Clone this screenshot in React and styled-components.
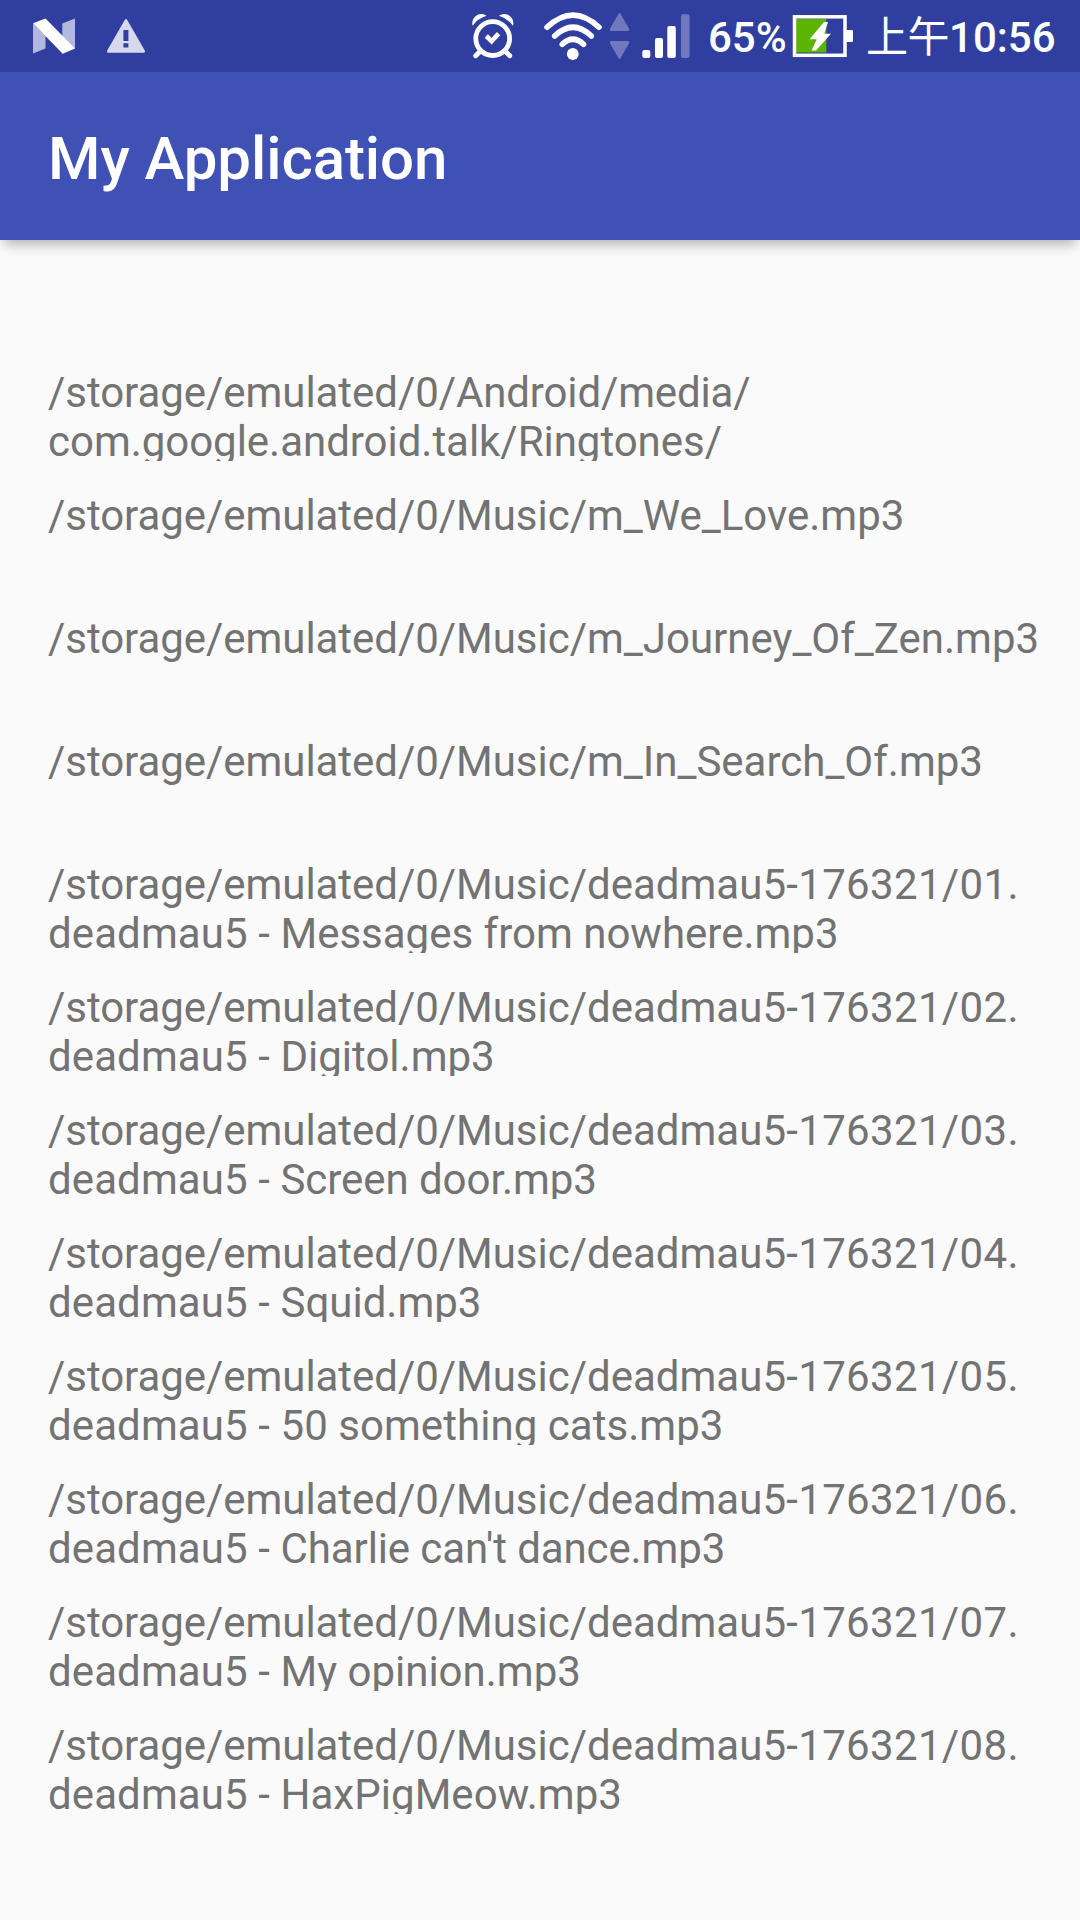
import React from "react";
import styled, { createGlobalStyle } from "styled-components";

const GlobalStyle = createGlobalStyle`
  * { box-sizing: border-box; }
  body { margin: 0; background: #fafafa; }
`;

const Screen = styled.div`
  display: flex;
  flex-direction: column;
  width: 1080px;
  height: 1920px;
  overflow: hidden;
  background: #fafafa;
  font-family: Roboto, "Noto Sans CJK TC", sans-serif;
`;

const StatusBar = styled.header`
  display: flex;
  flex: none;
  justify-content: space-between;
  height: 72px;
  padding: 0 24px 0 32px;
  background: #303f9f;
  color: #fff;
`;

const StatusGroup = styled.div`
  display: flex;
  align-items: flex-start;
`;

const Icon = styled.svg`
  display: block;
  flex: none;
  width: ${(p) => p.$width}px;
  height: 72px;
  margin-right: ${(p) => p.$gap || 0}px;
`;

const StatusText = styled.span`
  display: block;
  width: ${(p) => p.$width}px;
  height: 72px;
  padding-top: 13px;
  font-size: 42px;
  font-weight: 500;
  line-height: 50px;
  white-space: nowrap;
`;

const Meridiem = styled.span`
  font-family: "Noto Sans CJK TC", sans-serif;
  font-weight: 400;
  letter-spacing: -0.5px;
  line-height: 1;
`;

const AppBar = styled.div`
  display: flex;
  flex: none;
  align-items: center;
  height: 168px;
  padding: 6px 48px 0;
  background: #3f51b5;
  box-shadow: 0 8px 12px -4px rgba(0, 0, 0, 0.3);
  z-index: 1;
`;

const Title = styled.h1`
  margin: 0;
  color: #fff;
  font-size: 60px;
  font-weight: 500;
  letter-spacing: -0.08px;
  line-height: 70px;
`;

const FileList = styled.ul`
  display: flex;
  flex-direction: column;
  gap: 30px;
  margin: 0;
  padding: 128px 0 0 48px;
  list-style: none;
`;

const FileRow = styled.li`
  height: 93px;
  overflow: hidden;
  color: #737373;
  font-size: 42px;
  line-height: 49px;
  white-space: pre-line;
`;

const Run = styled.span`
  letter-spacing: ${(p) => p.$tracking}px;
`;

/* Each path is a list of [text, tracking] runs. */
const root = ["/storage/emulated/0/", -0.05];

const single = (name) => [root, ["Music/" + name, 0]];

const track = (number, title, tracking = 0) => [
  root,
  ["Music/deadmau", 0],
  ["5-176321/" + number + ".\n", 0.33],
  ["deadmau5 - ", 0.1],
  [title, tracking],
];

const files = [
  [root, ["Android/media/\n", -0.14], ["com.google.android.talk/Ringtones/", -0.03]],
  single("m_We_Love.mp3"),
  single("m_Journey_Of_Zen.mp3"),
  single("m_In_Search_Of.mp3"),
  track("01", "Messages from nowhere.mp3"),
  track("02", "Digitol.mp3"),
  track("03", "Screen door.mp3", -0.06),
  track("04", "Squid.mp3"),
  track("05", "50 something cats.mp3", 0.05),
  track("06", "Charlie can't dance.mp3", -0.1),
  track("07", "My opinion.mp3"),
  track("08", "HaxPigMeow.mp3", 0.04),
];

const NougatIcon = () => (
  <Icon $width={44} $gap={30} viewBox="32 0 44 72">
    <path d="M33 23.5 45.5 36V48.5L33 53.5Z" fill="#b3b8dd" />
    <path d="M62.3 23.5 75 18.5V49L62.3 38Z" fill="#b3b8dd" />
    <path d="M33 23.3 45.5 18.5 75 48.5 62.7 53.7Z" fill="#fff" />
  </Icon>
);

const WarningIcon = () => (
  <Icon $width={40} viewBox="106 0 40 72">
    <path
      fillRule="evenodd"
      fill="#d6d9ec"
      d="M124.6 20.2Q126 18 127.4 20.2L144.8 50.4Q145.6 52.6 143.4 52.7H108.6Q106.4 52.6 107.2 50.4ZM123.4 30V41H128.4V30ZM123.4 43.2V47.6H128.4V43.2Z"
    />
  </Icon>
);

const AlarmIcon = () => (
  <Icon $width={44} $gap={28} viewBox="471 0 44 72" fill="none" stroke="#fff">
    <circle cx="492.7" cy="38.6" r="16.9" strokeWidth="4.8" />
    <path d="M486.3 36 491.6 41.2 498.6 33.6" strokeWidth="4.6" />
    <path d="M480.5 51 475.7 55.8M505 51 509.8 55.8" strokeWidth="4.8" strokeLinecap="round" />
    <path
      d="M472.6 25.8C470.5 18 479 10.200 486.500 15.800Q477.800 18.500 472.600 25.800ZM513 25.800C515.200 18 506.600 10.200 499 15.800Q507.800 18.500 513 25.800Z"
      fill="#fff"
      stroke="none"
    />
  </Icon>
);

const WifiIcon = () => (
  <Icon $width={60} $gap={6} viewBox="543 0 60 72" fill="none" stroke="#fff" strokeWidth="5.6" strokeLinecap="round">
    <path d="M547 27.2Q573 3 599 27.2" />
    <path d="M554.7 36Q573 18.5 591.3 36" />
    <path d="M562.3 44.3Q573 34.3 583.5 44.3" />
    <circle cx="572.8" cy="54" r="5.9" fill="#fff" stroke="none" />
  </Icon>
);

const DataIcon = () => (
  <Icon $width={21} $gap={12} viewBox="609 0 21 72" fill="#7079bd">
    <path d="M618.5 13.8Q619.5 12 620.5 13.8L629.2 29Q629.6 31 628 31H611Q609.4 31 609.8 29Z" />
    <path d="M618.5 58.2Q619.5 60 620.5 58.2L629.2 43Q629.6 41 628 41H611Q609.4 41 609.8 43Z" />
  </Icon>
);

const SignalIcon = () => (
  <Icon $width={49} $gap={17} viewBox="642 0 49 72" fill="#fff">
    <rect x="642.3" y="50" width="8" height="8" rx="2" />
    <rect x="655" y="38" width="8" height="20" rx="2" />
    <rect x="667.3" y="26" width="8.5" height="32" rx="2" />
    <rect x="681" y="14.3" width="8.5" height="43.7" rx="2" fill="#7079bd" />
  </Icon>
);

const BatteryIcon = () => (
  <Icon $width={62} $gap={12} viewBox="792 0 62 72">
    <rect x="796" y="19" width="30.3" height="33.5" fill="#5cb300" />
    <rect x="794.5" y="16.8" width="50.5" height="38.5" fill="none" stroke="#fff" strokeWidth="3.5" />
    <rect x="846" y="30" width="7" height="12" rx="1" fill="#fff" />
    <path d="M824 22H828L824.3 33.8H831L816 50.5H811.5L816.8 39.2H809.6Z" fill="#fff" />
  </Icon>
);

export default function App() {
  return (
    <>
      <GlobalStyle />
      <Screen>
        <StatusBar>
          <StatusGroup>
            <NougatIcon />
            <WarningIcon />
          </StatusGroup>
          <StatusGroup>
            <AlarmIcon />
            <WifiIcon />
            <DataIcon />
            <SignalIcon />
            <StatusText $width={84}>65%</StatusText>
            <BatteryIcon />
            <StatusText $width={190}>
              <Meridiem>上午</Meridiem>10:56
            </StatusText>
          </StatusGroup>
        </StatusBar>
        <AppBar>
          <Title>My Application</Title>
        </AppBar>
        <FileList>
          {files.map((runs, row) => (
            <FileRow key={row}>
              {runs.map(([text, tracking], i) => (
                <Run key={i} $tracking={tracking}>
                  {text}
                </Run>
              ))}
            </FileRow>
          ))}
        </FileList>
      </Screen>
    </>
  );
}
